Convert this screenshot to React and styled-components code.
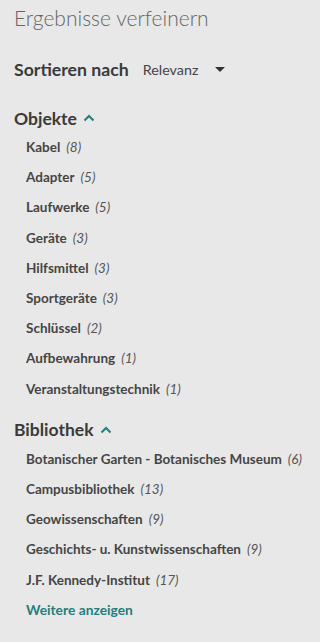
import React from "react";
import styled, { createGlobalStyle } from "styled-components";

const Global = createGlobalStyle`
  html, body { margin: 0; padding: 0; background: #e8e8e8; }
  body { font-family: Lato, "Liberation Sans", sans-serif; color: #444; }
`;

const Panel = styled.aside`
  width: 320px;
  min-height: 642px;
  box-sizing: border-box;
  padding: 4px 14px 0 14px;
  background: #e8e8e8;
`;

const Title = styled.h2`
  margin: 0;
  font-weight: 300;
  font-size: 21px;
  line-height: 28px;
  color: #666;
`;

const SortRow = styled.div`
  display: flex;
  align-items: center;
  margin-top: 24px;
  height: 26px;
`;

const SortLabel = styled.span`
  font-weight: 700;
  font-size: 17.7px;
  color: #3a3a3a;
`;

const SortSelect = styled.button`
  display: flex;
  align-items: center;
  border: 0;
  background: transparent;
  padding: 0;
  margin-left: 14px;
  font-family: inherit;
  font-size: 14.3px;
  color: #444;
  cursor: pointer;
`;

const Caret = styled.span`
  margin-left: 17px;
  width: 0;
  height: 0;
  border-left: 5px solid transparent;
  border-right: 5px solid transparent;
  border-top: 5px solid #333;
`;

const Section = styled.section`
  margin-top: ${(p) => p.$top}px;
`;

const SectionHead = styled.h3`
  display: flex;
  align-items: center;
  gap: 6px;
  margin: 0;
  height: 26px;
  font-weight: 700;
  font-size: 17.5px;
  color: #3a3a3a;
`;

const List = styled.ul`
  list-style: none;
  margin: 0;
  padding: 1px 0 0 12px;
`;

const Item = styled.li`
  height: 30.2px;
  display: flex;
  align-items: center;
  white-space: nowrap;
  font-size: 13.5px;
  font-weight: 700;
  color: #454545;
`;

const Count = styled.em`
  margin-left: 6px;
  font-weight: 400;
  color: #555;
`;

const More = styled.a`
  font-size: 13.8px;
  font-weight: 700;
  color: #217f7c;
  text-decoration: none;
`;

const Chevron = () => (
  <svg width="12" height="8" viewBox="0 0 12 8" aria-hidden="true">
    <path d="M1.5 6.5 L6 2 L10.5 6.5" fill="none" stroke="#217f7c" strokeWidth="2" />
  </svg>
);

const objekte = [
  ["Kabel", 8],
  ["Adapter", 5],
  ["Laufwerke", 5],
  ["Geräte", 3],
  ["Hilfsmittel", 3],
  ["Sportgeräte", 3],
  ["Schlüssel", 2],
  ["Aufbewahrung", 1],
  ["Veranstaltungstechnik", 1],
];

const bibliothek = [
  ["Botanischer Garten - Botanisches Museum", 6],
  ["Campusbibliothek", 13],
  ["Geowissenschaften", 9],
  ["Geschichts- u. Kunstwissenschaften", 9],
  ["J.F. Kennedy-Institut", 17],
];

export default function App() {
  return (
    <Panel>
      <Global />
      <Title>Ergebnisse verfeinern</Title>
      <SortRow>
        <SortLabel>Sortieren nach</SortLabel>
        <SortSelect>
          Relevanz
          <Caret />
        </SortSelect>
      </SortRow>
      <Section $top={23}>
        <SectionHead>
          Objekte <Chevron />
        </SectionHead>
        <List>
          {objekte.map(([n, c]) => (
            <Item key={n}>
              {n}
              <Count>({c})</Count>
            </Item>
          ))}
        </List>
      </Section>
      <Section $top={13}>
        <SectionHead>
          Bibliothek <Chevron />
        </SectionHead>
        <List>
          {bibliothek.map(([n, c]) => (
            <Item key={n}>
              {n}
              <Count>({c})</Count>
            </Item>
          ))}
          <Item>
            <More href="#">Weitere anzeigen</More>
          </Item>
        </List>
      </Section>
    </Panel>
  );
}
